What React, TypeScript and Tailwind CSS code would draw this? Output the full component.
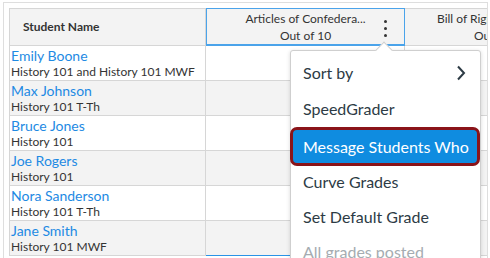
import React from "react";

const students = [
  { name: "Emily Boone", section: "History 101 and History 101 MWF" },
  { name: "Max Johnson", section: "History 101 T-Th" },
  { name: "Bruce Jones", section: "History 101" },
  { name: "Joe Rogers", section: "History 101" },
  { name: "Nora Sanderson", section: "History 101 T-Th" },
  { name: "Jane Smith", section: "History 101 MWF" },
];

export default function App() {
  return (
    <div className="relative w-[490px] h-[258px] overflow-hidden bg-white pt-[2px] pl-[3px]" style={{ fontFamily: "Lato, 'Noto Sans', sans-serif" }}>
      <div className="w-[485px] h-[300px] overflow-hidden border-t border-l border-r border-[#dedede] pl-[5px] pt-[5px]">
        <div className="w-[600px] border-l border-t border-[#d6d6d6]">
          {/* header */}
          <div className="flex h-[37px]">
            <div className="w-[196px] shrink-0 bg-[#f3f3f3] border-r border-b border-[#d6d6d6] flex items-center pl-[13px] text-[12px] font-bold text-[#333]">
              Student Name
            </div>
            <div className="relative w-[199px] shrink-0 bg-[#f3f3f3] border border-[#4aa3ea] border-b-2 flex flex-col items-center justify-center text-[12px] leading-[17px] text-[#333] -mt-px">
              <span>Articles of Confedera...</span>
              <span>Out of 10</span>
              <div className="absolute left-[177px] top-[11px] flex flex-col gap-[4px]">
                <span className="block w-[3px] h-[3px] rounded-full bg-[#333]" />
                <span className="block w-[3px] h-[3px] rounded-full bg-[#333]" />
                <span className="block w-[3px] h-[3px] rounded-full bg-[#333]" />
              </div>
            </div>
            <div className="w-[190px] shrink-0 bg-[#f3f3f3] border-r border-b border-[#d6d6d6] flex flex-col items-center justify-center text-[12px] leading-[17px] text-[#333] whitespace-nowrap overflow-hidden">
              <span>Bill of Rights Discussion</span>
              <span>Out of 10</span>
            </div>
          </div>
          {/* rows */}
          {students.map((s, i) => {
            const bg = i % 2 === 0 ? "bg-white" : "bg-[#f3f3f3]";
            return (
              <div key={s.name} className={`flex h-[35px] ${bg}`}>
                <div className="w-[196px] shrink-0 border-r border-b border-[#d6d6d6] flex flex-col justify-center pl-[1px]">
                  <span className="text-[14px] leading-[16px] text-[#1e8ae3]">{s.name}</span>
                  <span className="text-[12px] leading-[15px] text-[#333]">{s.section}</span>
                </div>
                <div className={`w-[199px] shrink-0 border-r border-b border-[#d6d6d6] ${i === 5 ? "border-b-[#2a93e6]" : ""}`} />
                <div className="w-[190px] shrink-0 border-r border-b border-[#d6d6d6]" />
              </div>
            );
          })}
        </div>
      </div>

      {/* menu */}
      <div className="absolute left-[290px] top-[50px] w-[191px] h-[230px] bg-white border border-[#cfcfcf] rounded-[3px] shadow-[0_1px_4px_rgba(0,0,0,0.15)] pt-[4px] text-[16px] text-[#2d3b45] whitespace-nowrap">
        <div className="absolute -top-[7px] left-[87px] w-[12px] h-[12px] bg-white border-l border-t border-[#cfcfcf] rotate-45" />
        <div className="relative flex items-center justify-between h-[36px] pl-[12px] pr-[14px]">
          <span>Sort by</span>
          <svg width="10" height="16" viewBox="0 0 10 16" fill="none">
            <path d="M2 1.5 L8 8 L2 14.5" stroke="#2d3b45" strokeWidth="2" />
          </svg>
        </div>
        <div className="flex items-center h-[36px] pl-[12px]">SpeedGrader</div>
        <div className="flex items-center h-[39px] -ml-px border-[3px] border-[#8a1419] rounded-[7px] bg-[#0f8ce0] text-white pl-[10px]">
          Message Students Who
        </div>
        <div className="flex items-center h-[35px] -mt-[2px] pl-[12px]">Curve Grades</div>
        <div className="flex items-center h-[35px] pl-[12px]">Set Default Grade</div>
        <div className="flex items-center h-[35px] pl-[12px] text-[#a5acb1]">All grades posted</div>
      </div>
    </div>
  );
}
